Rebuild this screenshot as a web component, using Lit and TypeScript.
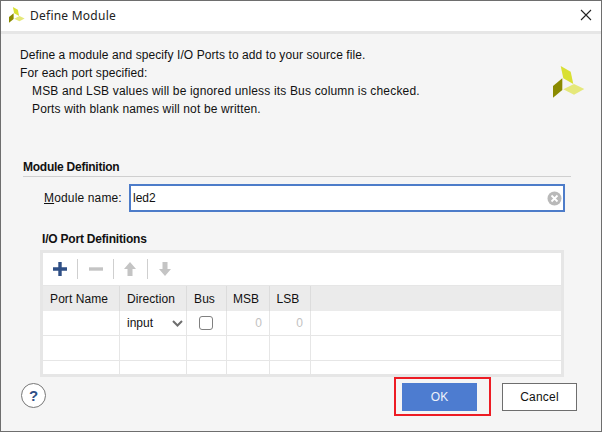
import { LitElement, html, css, svg } from "lit";
import { customElement } from "lit/decorators.js";

const logoShapes = svg`
  <polygon points="7.7,0 17.7,5.7 20.3,18 10.3,12.3" fill="#d9e033"/>
  <polygon points="9.3,12.3 9.3,24 0,31.7 0,20" fill="#8a8a00"/>
  <polygon points="10.3,23.3 21,18 31.3,23 21,28.7" fill="#e5e87a"/>
`;

@customElement("app-root")
export class AppRoot extends LitElement {
  static styles = css`
    :host {
      display: block;
      width: 602px;
      height: 432px;
      font-family: "Liberation Sans", Arial, sans-serif;
      font-size: 12px;
      color: #111;
    }
    .win {
      box-sizing: border-box;
      width: 602px;
      height: 432px;
      border: 1px solid #6e6e6e;
      background: #f5f5f5;
      display: flex;
      flex-direction: column;
    }
    .title {
      height: 28px;
      flex: none;
      box-sizing: content-box;
      background: #fff;
      border-bottom: 3px solid #e6e6e6;
      display: flex;
      align-items: center;
      padding: 0 9px 2px 8px;
      gap: 5px;
    }
    .title .name {
      font-family: "Noto Sans", sans-serif;
      font-size: 12px;
      letter-spacing: 0.24px;
      flex: 1;
      color: #222;
    }
    .small-logo { width: 16px; height: 16px; display: block; }
    .close { width: 12px; height: 12px; display: block; }
    .body {
      flex: 1;
      display: flex;
      flex-direction: column;
      min-height: 0;
    }
    .intro {
      display: flex;
      justify-content: space-between;
      padding: 12px 16px 0 19px;
      height: 112px;
      box-sizing: border-box;
      line-height: 18px;
    }
    .intro p { margin: 0; }
    .intro .ind { padding-left: 12px; }
    .l1, .l2 { letter-spacing: 0.08px; }
    .l3 { letter-spacing: 0.17px; }
    .l4 { letter-spacing: 0.14px; }
    .big-logo { width: 32px; height: 32px; display: block; margin-top: 20px; }
    .section {
      margin: 12px 30px 0 22px;
      height: 19px;
      line-height: 18px;
      box-sizing: border-box;
      font-weight: 700;
      letter-spacing: -0.25px;
      border-bottom: 1px solid #cfcfcf;
    }
    .name-row {
      display: flex;
      align-items: center;
      margin: 7px 36px 0 43px;
    }
    .label { width: 85px; flex: none; letter-spacing: 0.15px; }
    .name-row u { text-underline-offset: 1px; }
    .input {
      flex: 1;
      height: 28px;
      box-sizing: border-box;
      border: 2px solid #4d7cc9;
      background: #fff;
      display: flex;
      align-items: center;
      justify-content: space-between;
      padding: 0 1px 0 2px;
    }
    .clear { width: 15px; height: 15px; display: block; }
    .sub {
      margin: 18px 0 0 41px;
      height: 18px;
      line-height: 18px;
      font-weight: 700;
      letter-spacing: -0.2px;
    }
    .table {
      margin: 2px 0 0 39px;
      width: 524px;
      box-sizing: border-box;
      border: 3px solid #e6e6e6;
      height: 127px;
      background: #fff;
      display: flex;
      flex-direction: column;
    }
    .tools {
      height: 32px;
      flex: none;
      display: flex;
      align-items: center;
      border-bottom: 1px solid #e6e6e6;
    }
    .tool { width: 34px; height: 32px; display: flex; align-items: center; justify-content: center; }
    .tool svg { width: 16px; height: 16px; display: block; }
    .t2 { width: 35px; }
    .t3 { width: 33px; padding-right: 2px; box-sizing: border-box; }
    .t4 { width: 35px; padding-right: 2px; box-sizing: border-box; }
    .sep { width: 1px; height: 20px; background: #cfcfcf; flex: none; }
    .grid {
      display: grid;
      grid-template-columns: 77px 67px 40px 43px 41px 1fr;
      grid-template-rows: 25px 25px 25px 13px;
      flex: 1;
    }
    .c {
      box-sizing: border-box;
      border-right: 1px solid #e6e6e6;
      border-bottom: 1px solid #e6e6e6;
      display: flex;
      align-items: center;
      white-space: nowrap;
      min-width: 0;
    }
    .c:nth-child(6n) { border-right: none; }
    .h {
      background: #ebebeb;
      border-bottom: none;
      border-right-color: #dcdcdc;
      justify-content: center;
      padding-right: 4px;
      height: 25px;
      letter-spacing: 0.05px;
    }
    .last { border-bottom: none; }
    .sel {
      justify-content: space-between;
      padding: 0 3px 0 7px;
    }
    .chev { width: 11px; height: 7px; display: block; }
    .check {
      width: 14px;
      height: 14px;
      box-sizing: border-box;
      border: 1.5px solid #808080;
      border-radius: 3px;
      background: #fff;
    }
    .ctr { justify-content: center; padding-right: 2px; }
    .num { justify-content: flex-end; padding-right: 7px; color: #c2c2c2; }
    .footer {
      flex: 1;
      position: relative;
      display: flex;
      align-items: flex-start;
      padding: 6px 24px 0 20px;
    }
    .help {
      width: 25px;
      height: 25px;
      box-sizing: border-box;
      border: 1px solid #777;
      border-radius: 50%;
      background: #fff;
      color: #2f4f85;
      font-weight: 700;
      font-size: 15px;
      display: flex;
      align-items: center;
      justify-content: center;
    }
    .spacer { flex: 1; }
    .btn {
      width: 75px;
      height: 28px;
      box-sizing: border-box;
      display: flex;
      align-items: center;
      justify-content: center;
    }
    .ok { background: #4d7cd0; color: #eef2fa; margin-right: 25px; }
    .cancel { background: #fff; border: 1px solid #6e6e6e; color: #111; letter-spacing: 0.2px; }
    .mark {
      position: absolute;
      left: 393px;
      top: 0;
      width: 97px;
      height: 39px;
      box-sizing: border-box;
      border: 2px solid #ed1c24;
    }
  `;

  render() {
    const cols = ["Port Name", "Direction", "Bus", "MSB", "LSB", ""];
    return html`
      <div class="win">
        <div class="title">
          <svg class="small-logo" viewBox="0 0 32 32">${logoShapes}</svg>
          <span class="name">Define Module</span>
          <svg class="close" viewBox="0 0 12 12"><path d="M1 1 L11 11 M11 1 L1 11" stroke="#222" stroke-width="1.1" fill="none"/></svg>
        </div>
        <div class="body">
          <div class="intro">
            <div>
              <p class="l1">Define a module and specify I/O Ports to add to your source file.</p>
              <p class="l2">For each port specified:</p>
              <p class="ind l3">MSB and LSB values will be ignored unless its Bus column is checked.</p>
              <p class="ind l4">Ports with blank names will not be written.</p>
            </div>
            <svg class="big-logo" viewBox="0 0 32 32">${logoShapes}</svg>
          </div>
          <div class="section">Module Definition</div>
          <div class="name-row">
            <span class="label"><u>M</u>odule name:</span>
            <div class="input">
              <span>led2</span>
              <svg class="clear" viewBox="0 0 15 15">
                <circle cx="7.5" cy="7.5" r="7" fill="#b9b9b9"/>
                <path d="M4.5 4.5 L10.5 10.5 M10.5 4.5 L4.5 10.5" stroke="#fff" stroke-width="1.8" fill="none"/>
              </svg>
            </div>
          </div>
          <div class="sub">I/O Port Definitions</div>
          <div class="table">
            <div class="tools">
              <div class="tool"><svg viewBox="0 0 16 16"><path d="M1 8 H15 M8 1 V15" stroke="#2f4f85" stroke-width="3.4" fill="none"/></svg></div>
              <div class="sep"></div>
              <div class="tool t2"><svg viewBox="0 0 16 16"><path d="M1 8 H15" stroke="#c4c4c4" stroke-width="3.4" fill="none"/></svg></div>
              <div class="sep"></div>
              <div class="tool t3"><svg viewBox="0 0 16 16"><path d="M8 1 L14 8 H10.5 V15 H5.5 V8 H2 Z" fill="#c4c4c4"/></svg></div>
              <div class="sep"></div>
              <div class="tool t4"><svg viewBox="0 0 16 16"><path d="M8 15 L14 8 H10.5 V1 H5.5 V8 H2 Z" fill="#c4c4c4"/></svg></div>
            </div>
            <div class="grid">
              ${cols.map((c) => html`<div class="c h">${c}</div>`)}
              <div class="c"></div>
              <div class="c sel">
                <span>input</span>
                <svg class="chev" viewBox="0 0 11 7"><path d="M1 1 L5.5 5.5 L10 1" stroke="#6e6e6e" stroke-width="2" fill="none"/></svg>
              </div>
              <div class="c ctr"><div class="check"></div></div>
              <div class="c num">0</div>
              <div class="c num">0</div>
              <div class="c"></div>
              ${[0, 1, 2, 3, 4, 5].map(() => html`<div class="c"></div>`)}
              ${[0, 1, 2, 3, 4, 5].map(() => html`<div class="c last"></div>`)}
            </div>
          </div>
          <div class="footer">
            <div class="help">?</div>
            <div class="spacer"></div>
            <div class="btn ok">OK</div>
            <div class="btn cancel">Cancel</div>
            <div class="mark"></div>
          </div>
        </div>
      </div>
    `;
  }
}
